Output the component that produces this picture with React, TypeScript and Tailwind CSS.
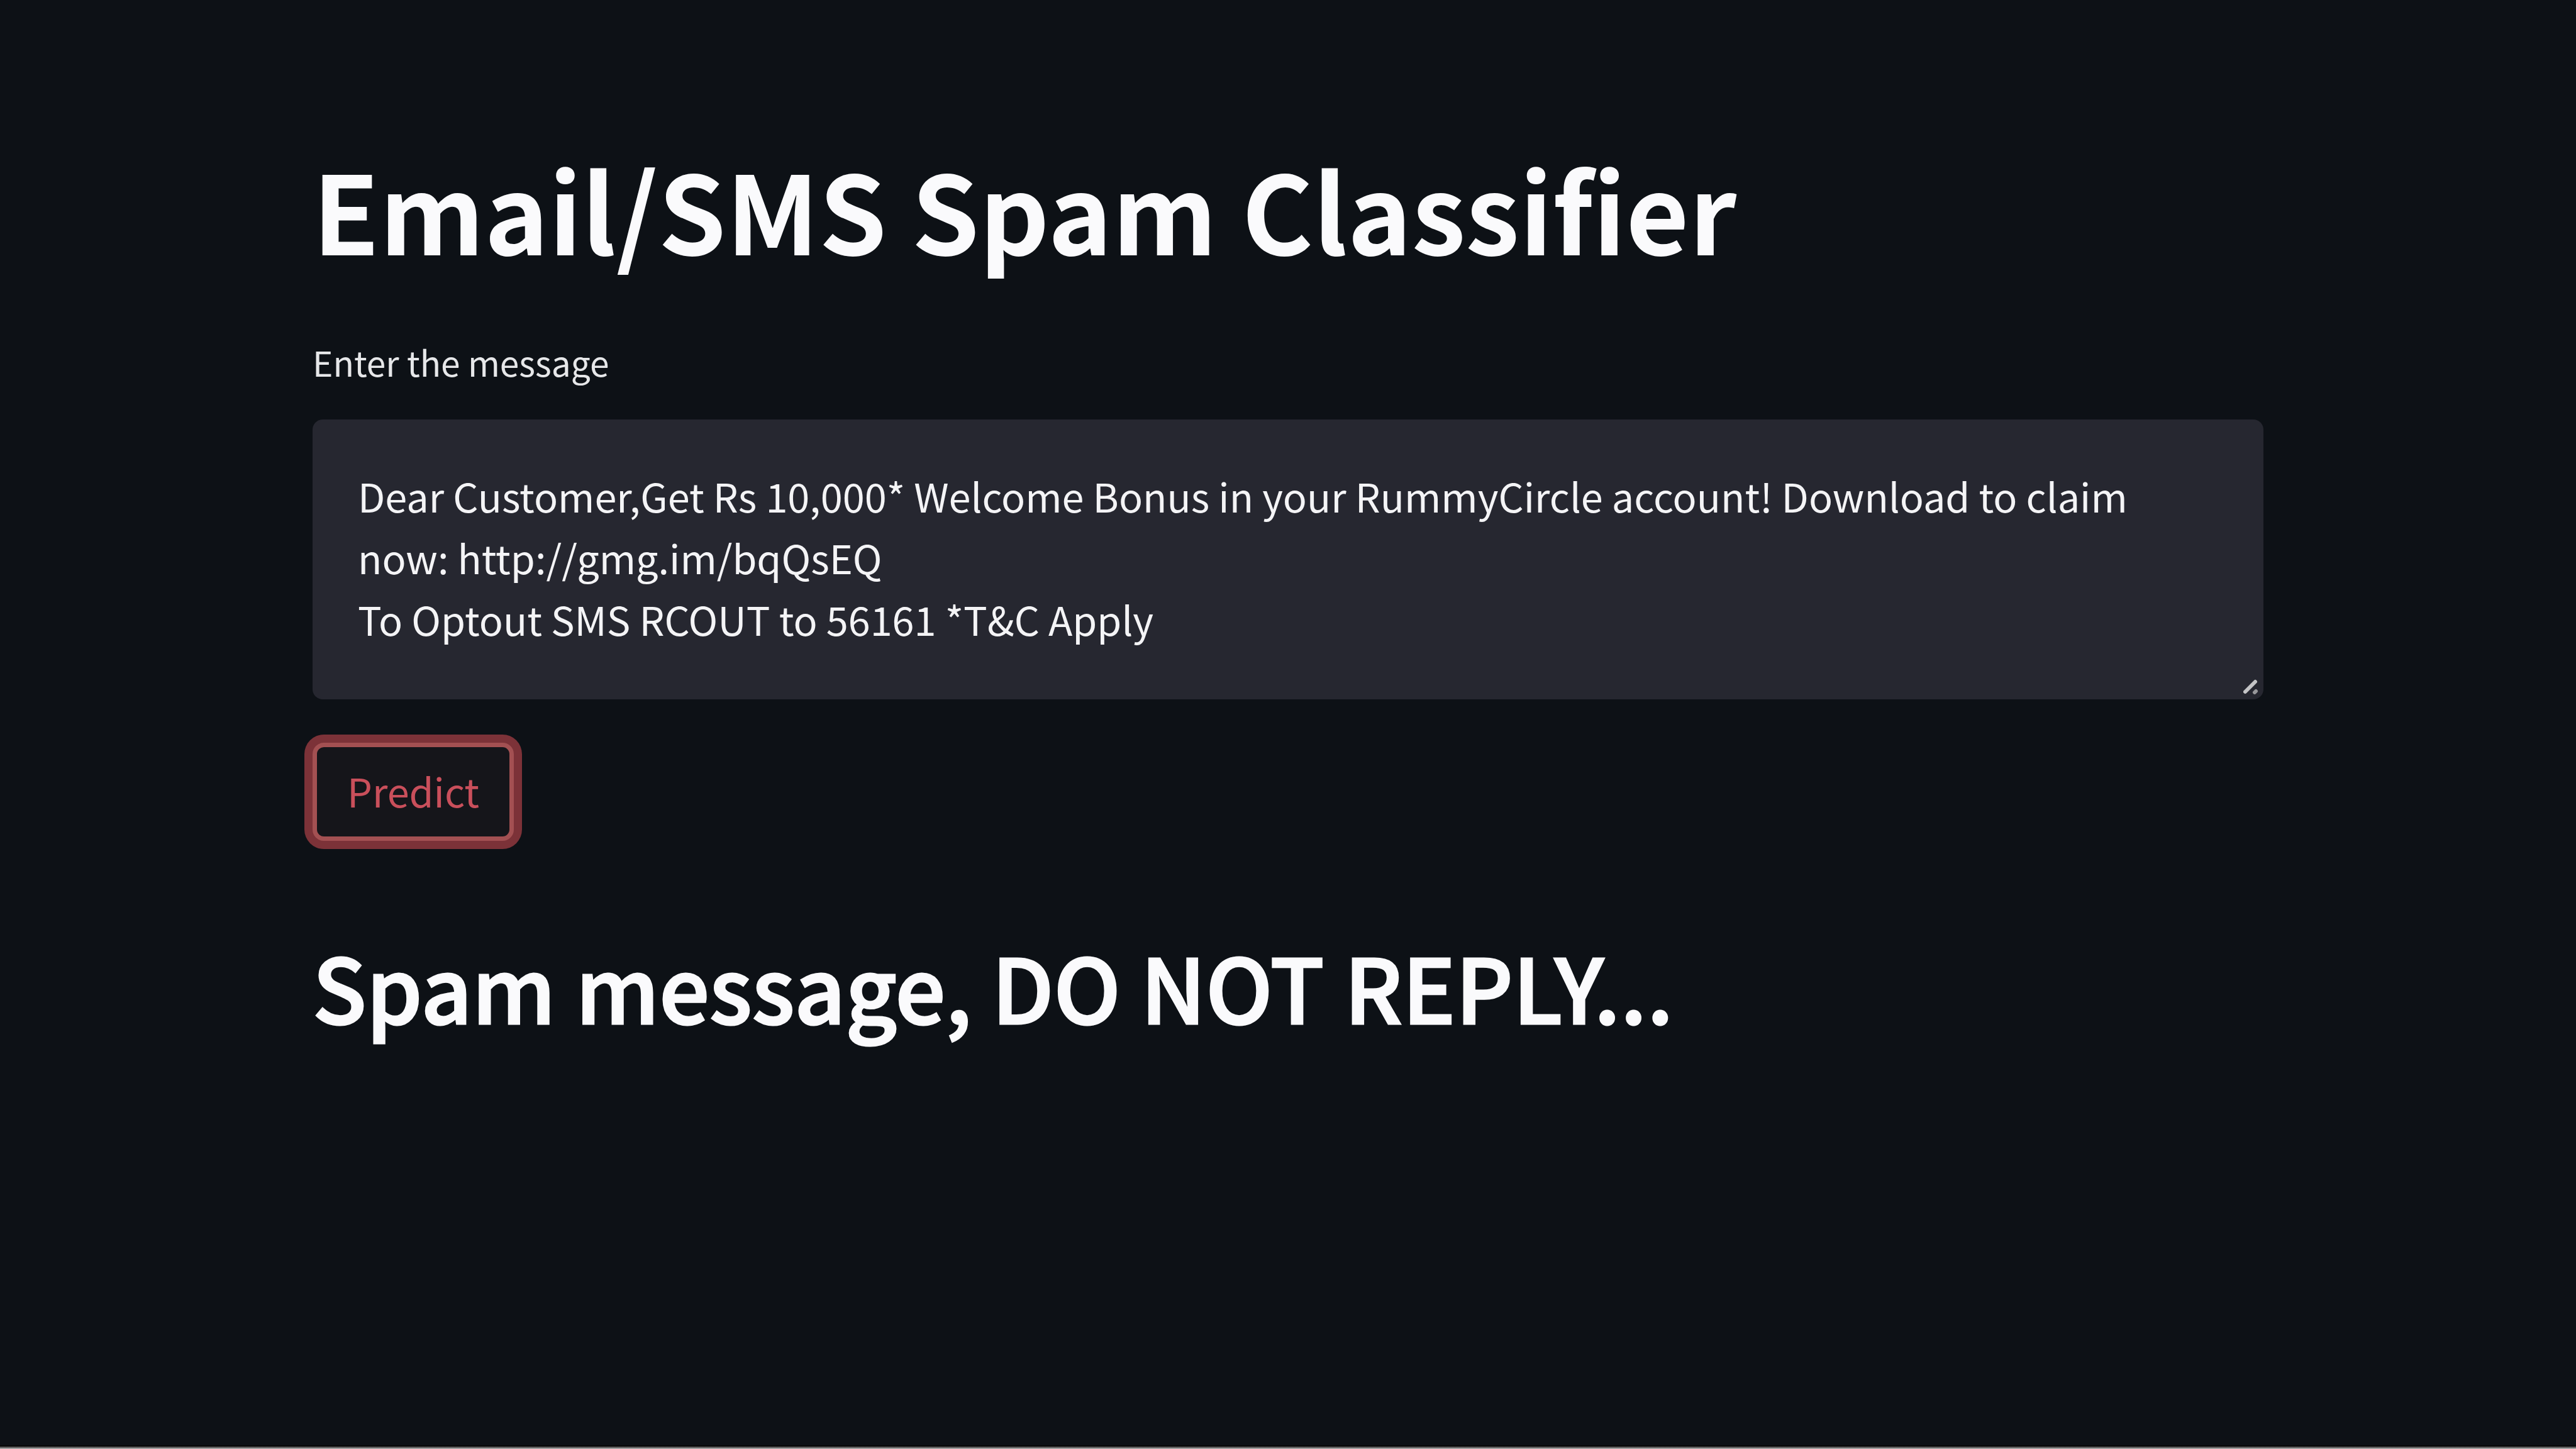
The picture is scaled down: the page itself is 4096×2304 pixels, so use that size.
import { useState } from "react";

const SAMPLE_MESSAGE =
  "Dear Customer,Get Rs 10,000* Welcome Bonus in your RummyCircle account! Download to claim now: http://gmg.im/bqQsEQ\nTo Optout SMS RCOUT to 56161 *T&C Apply";

function ResizeGrip() {
  return (
    <svg
      className="pointer-events-none absolute right-2 bottom-2 h-6 w-6"
      viewBox="0 0 24 24"
      fill="none"
      strokeLinecap="round"
      aria-hidden="true"
    >
      <path d="M3 20 L19 4" stroke="#c4c4c6" strokeWidth="6" />
      <path d="M18 21 L20 19" stroke="#97979a" strokeWidth="6" />
    </svg>
  );
}

function MessageField() {
  const [message, setMessage] = useState(SAMPLE_MESSAGE);
  return (
    <div className="mt-[96px] flex flex-col gap-[48px]">
      <label htmlFor="message" className="text-[55px] leading-[88px] text-[#e6e7e9]">
        Enter the message
      </label>
      <div className="relative flex">
        <textarea
          id="message"
          rows={3}
          spellCheck={false}
          value={message}
          onChange={(event) => setMessage(event.target.value)}
          className="h-[445px] w-full resize-none overflow-hidden rounded-[16px] bg-[#262730] p-[72px] text-[63px] leading-[98px] text-[#f4f4f6] outline-none"
        />
        <ResizeGrip />
      </div>
    </div>
  );
}

export default function App() {
  return (
    <div className="flex min-h-screen flex-col bg-[#0d1116] font-['Noto_Sans_CJK_SC','Noto_Sans',sans-serif]">
      <main className="mx-auto flex w-full max-w-[3102px] flex-1 flex-col pt-[227px]">
        <h1 className="text-[173px] leading-[208px] font-bold text-[#fafafc]">
          Email/SMS Spam Classifier
        </h1>
        <MessageField />
        <button
          type="button"
          className="mt-[69px] h-[156px] self-start rounded-[18px] border-[7px] border-[#a35052] bg-[#15151a] px-[48px] pb-[4px] text-[63px] leading-[98px] text-[#c94f5b] ring-[13px] ring-[#7c3238]"
        >
          Predict
        </button>
        <h2 className="mt-[144px] text-[141px] leading-[172px] font-medium text-[#fafafc] [-webkit-text-stroke:3px_#fafafc]">
          Spam message, DO NOT REPLY...
        </h2>
      </main>
      <footer className="h-[6px] bg-linear-to-b from-black to-[#c8c8c8]" />
    </div>
  );
}
